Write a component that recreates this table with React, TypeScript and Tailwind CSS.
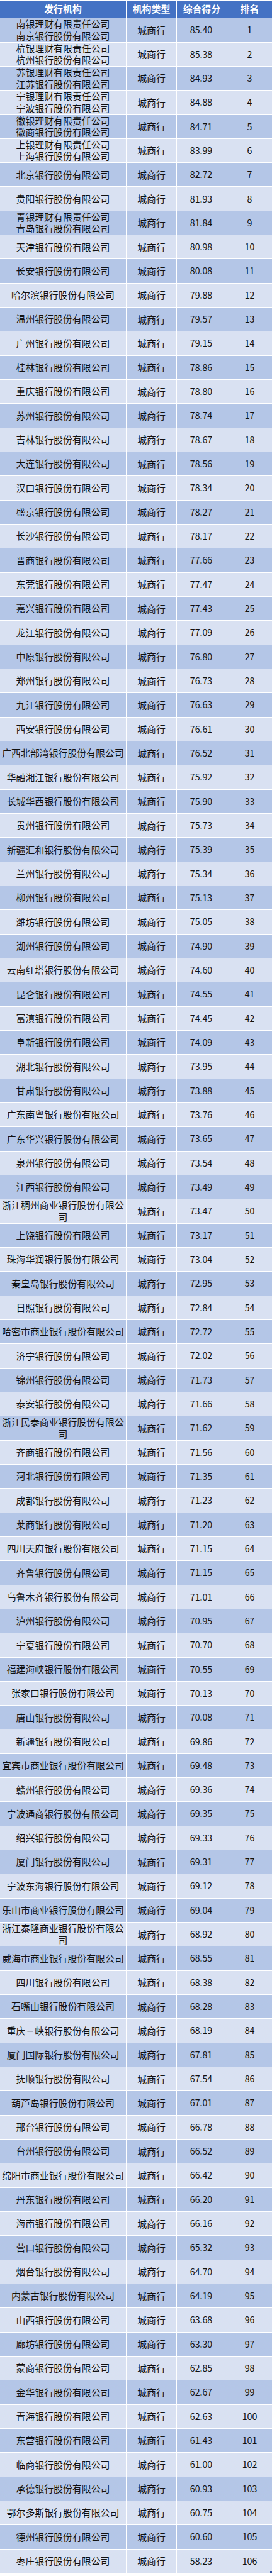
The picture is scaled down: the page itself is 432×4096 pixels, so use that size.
import React from "react";

type Row = { name: string[]; score: string };

const rows: Row[] = [
  { name: ["南银理财有限责任公司", "南京银行股份有限公司"], score: "85.40" },
  { name: ["杭银理财有限责任公司", "杭州银行股份有限公司"], score: "85.38" },
  { name: ["苏银理财有限责任公司", "江苏银行股份有限公司"], score: "84.93" },
  { name: ["宁银理财有限责任公司", "宁波银行股份有限公司"], score: "84.88" },
  { name: ["徽银理财有限责任公司", "徽商银行股份有限公司"], score: "84.71" },
  { name: ["上银理财有限责任公司", "上海银行股份有限公司"], score: "83.99" },
  { name: ["北京银行股份有限公司"], score: "82.72" },
  { name: ["贵阳银行股份有限公司"], score: "81.93" },
  { name: ["青银理财有限责任公司", "青岛银行股份有限公司"], score: "81.84" },
  { name: ["天津银行股份有限公司"], score: "80.98" },
  { name: ["长安银行股份有限公司"], score: "80.08" },
  { name: ["哈尔滨银行股份有限公司"], score: "79.88" },
  { name: ["温州银行股份有限公司"], score: "79.57" },
  { name: ["广州银行股份有限公司"], score: "79.15" },
  { name: ["桂林银行股份有限公司"], score: "78.86" },
  { name: ["重庆银行股份有限公司"], score: "78.80" },
  { name: ["苏州银行股份有限公司"], score: "78.74" },
  { name: ["吉林银行股份有限公司"], score: "78.67" },
  { name: ["大连银行股份有限公司"], score: "78.56" },
  { name: ["汉口银行股份有限公司"], score: "78.34" },
  { name: ["盛京银行股份有限公司"], score: "78.27" },
  { name: ["长沙银行股份有限公司"], score: "78.17" },
  { name: ["晋商银行股份有限公司"], score: "77.66" },
  { name: ["东莞银行股份有限公司"], score: "77.47" },
  { name: ["嘉兴银行股份有限公司"], score: "77.43" },
  { name: ["龙江银行股份有限公司"], score: "77.09" },
  { name: ["中原银行股份有限公司"], score: "76.80" },
  { name: ["郑州银行股份有限公司"], score: "76.73" },
  { name: ["九江银行股份有限公司"], score: "76.63" },
  { name: ["西安银行股份有限公司"], score: "76.61" },
  { name: ["广西北部湾银行股份有限公司"], score: "76.52" },
  { name: ["华融湘江银行股份有限公司"], score: "75.92" },
  { name: ["长城华西银行股份有限公司"], score: "75.90" },
  { name: ["贵州银行股份有限公司"], score: "75.73" },
  { name: ["新疆汇和银行股份有限公司"], score: "75.39" },
  { name: ["兰州银行股份有限公司"], score: "75.34" },
  { name: ["柳州银行股份有限公司"], score: "75.13" },
  { name: ["潍坊银行股份有限公司"], score: "75.05" },
  { name: ["湖州银行股份有限公司"], score: "74.90" },
  { name: ["云南红塔银行股份有限公司"], score: "74.60" },
  { name: ["昆仑银行股份有限公司"], score: "74.55" },
  { name: ["富滇银行股份有限公司"], score: "74.45" },
  { name: ["阜新银行股份有限公司"], score: "74.09" },
  { name: ["湖北银行股份有限公司"], score: "73.95" },
  { name: ["甘肃银行股份有限公司"], score: "73.88" },
  { name: ["广东南粤银行股份有限公司"], score: "73.76" },
  { name: ["广东华兴银行股份有限公司"], score: "73.65" },
  { name: ["泉州银行股份有限公司"], score: "73.54" },
  { name: ["江西银行股份有限公司"], score: "73.49" },
  { name: ["浙江稠州商业银行股份有限公司"], score: "73.47" },
  { name: ["上饶银行股份有限公司"], score: "73.17" },
  { name: ["珠海华润银行股份有限公司"], score: "73.04" },
  { name: ["秦皇岛银行股份有限公司"], score: "72.95" },
  { name: ["日照银行股份有限公司"], score: "72.84" },
  { name: ["哈密市商业银行股份有限公司"], score: "72.72" },
  { name: ["济宁银行股份有限公司"], score: "72.02" },
  { name: ["锦州银行股份有限公司"], score: "71.73" },
  { name: ["泰安银行股份有限公司"], score: "71.66" },
  { name: ["浙江民泰商业银行股份有限公司"], score: "71.62" },
  { name: ["齐商银行股份有限公司"], score: "71.56" },
  { name: ["河北银行股份有限公司"], score: "71.35" },
  { name: ["成都银行股份有限公司"], score: "71.23" },
  { name: ["莱商银行股份有限公司"], score: "71.20" },
  { name: ["四川天府银行股份有限公司"], score: "71.15" },
  { name: ["齐鲁银行股份有限公司"], score: "71.15" },
  { name: ["乌鲁木齐银行股份有限公司"], score: "71.01" },
  { name: ["泸州银行股份有限公司"], score: "70.95" },
  { name: ["宁夏银行股份有限公司"], score: "70.70" },
  { name: ["福建海峡银行股份有限公司"], score: "70.55" },
  { name: ["张家口银行股份有限公司"], score: "70.13" },
  { name: ["唐山银行股份有限公司"], score: "70.08" },
  { name: ["新疆银行股份有限公司"], score: "69.86" },
  { name: ["宜宾市商业银行股份有限公司"], score: "69.48" },
  { name: ["赣州银行股份有限公司"], score: "69.36" },
  { name: ["宁波通商银行股份有限公司"], score: "69.35" },
  { name: ["绍兴银行股份有限公司"], score: "69.33" },
  { name: ["厦门银行股份有限公司"], score: "69.31" },
  { name: ["宁波东海银行股份有限公司"], score: "69.12" },
  { name: ["乐山市商业银行股份有限公司"], score: "69.04" },
  { name: ["浙江泰隆商业银行股份有限公司"], score: "68.92" },
  { name: ["威海市商业银行股份有限公司"], score: "68.55" },
  { name: ["四川银行股份有限公司"], score: "68.38" },
  { name: ["石嘴山银行股份有限公司"], score: "68.28" },
  { name: ["重庆三峡银行股份有限公司"], score: "68.19" },
  { name: ["厦门国际银行股份有限公司"], score: "67.81" },
  { name: ["抚顺银行股份有限公司"], score: "67.54" },
  { name: ["葫芦岛银行股份有限公司"], score: "67.01" },
  { name: ["邢台银行股份有限公司"], score: "66.78" },
  { name: ["台州银行股份有限公司"], score: "66.52" },
  { name: ["绵阳市商业银行股份有限公司"], score: "66.42" },
  { name: ["丹东银行股份有限公司"], score: "66.20" },
  { name: ["海南银行股份有限公司"], score: "66.16" },
  { name: ["营口银行股份有限公司"], score: "65.32" },
  { name: ["烟台银行股份有限公司"], score: "64.70" },
  { name: ["内蒙古银行股份有限公司"], score: "64.19" },
  { name: ["山西银行股份有限公司"], score: "63.68" },
  { name: ["廊坊银行股份有限公司"], score: "63.30" },
  { name: ["蒙商银行股份有限公司"], score: "62.85" },
  { name: ["金华银行股份有限公司"], score: "62.67" },
  { name: ["青海银行股份有限公司"], score: "62.63" },
  { name: ["东营银行股份有限公司"], score: "61.43" },
  { name: ["临商银行股份有限公司"], score: "61.00" },
  { name: ["承德银行股份有限公司"], score: "60.93" },
  { name: ["鄂尔多斯银行股份有限公司"], score: "60.75" },
  { name: ["德州银行股份有限公司"], score: "60.60" },
  { name: ["枣庄银行股份有限公司"], score: "58.23" },
];

export default function App() {
  return (
    <div className="w-full bg-white font-['Noto_Sans_CJK_SC','Noto_Sans',sans-serif]">
      <div className="flex flex-col gap-px pt-[0.5px]">
        <div className="mb-[0.4px] grid h-[27.3px] grid-cols-[200px_79px_79px_1fr] gap-x-px text-[14.9px] font-bold text-white">
          <div className="flex items-center justify-center bg-[#4472C4]">发行机构</div>
          <div className="flex items-center justify-center bg-[#4472C4]">机构类型</div>
          <div className="flex items-center justify-center bg-[#4472C4]">综合得分</div>
          <div className="flex items-center justify-center bg-[#4472C4]">排名</div>
        </div>
        {rows.map((r, i) => {
          const bg = i % 2 === 0 ? "bg-[#B4C6E7]" : "bg-[#D9E1F2]";
          const last = i === rows.length - 1;
          return (
            <div
              key={i}
              className="grid h-[37.33px] grid-cols-[200px_79px_79px_1fr] gap-x-px text-[14.9px] text-[#111111]"
            >
              <div className={`flex flex-col items-center justify-center px-px text-center leading-[18.6px] ${bg}`}>
                {r.name.map((n, j) => (
                  <div key={j}>{n}</div>
                ))}
              </div>
              <div className={`flex items-center justify-center ${bg}`}>城商行</div>
              <div className={`flex items-center justify-center pr-[2px] text-[14.2px] ${bg}`}>{r.score}</div>
              <div className={`relative flex items-center justify-center text-[14.2px] ${bg}`}>
                {i + 1}
                {last && (
                  <div className="absolute bottom-0 right-0 h-[3px] w-[3px] bg-[#2F4F9F]" />
                )}
              </div>
            </div>
          );
        })}
      </div>
    </div>
  );
}
